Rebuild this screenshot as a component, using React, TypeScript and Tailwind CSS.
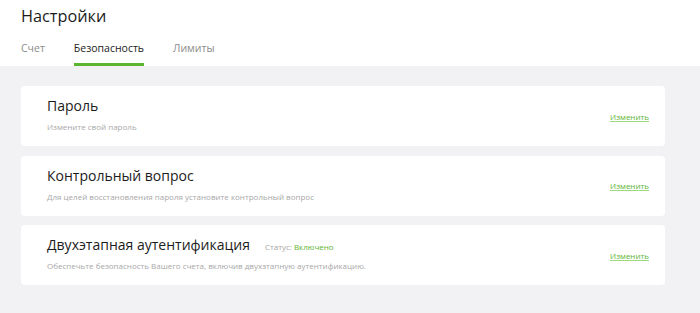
const sections = [
  { title: "Пароль", text: "Измените свой пароль" },
  {
    title: "Контрольный вопрос",
    text: "Для целей восстановления пароля установите контрольный вопрос",
  },
  {
    title: "Двухэтапная аутентификация",
    text: "Обеспечьте безопасность Вашего счета, включив двухэтапную аутентификацию.",
    status: "Включено",
  },
];

const tabs = ["Счет", "Безопасность", "Лимиты"];

export default function App() {
  return (
    <div className="min-h-[313px] w-[700px] bg-[#f2f2f4] font-['Open_Sans',sans-serif]">
      <header className="h-[66px] bg-white px-[21px] pt-[4px]">
        <h1 className="text-[16.3px] leading-[24px] text-[#1c1c1c]">
          Настройки
        </h1>
        <nav className="mt-[12px] flex gap-[29px]">
          {tabs.map((tab, i) => (
            <div
              key={tab}
              className={
                i === 1
                  ? "border-b-[3px] border-[#5cb531] pb-[7px] text-[10.5px] leading-[16px] text-[#1c1c1c]"
                  : "border-b-[3px] border-transparent pb-[7px] text-[10.5px] leading-[16px] text-[#8c8c8c]"
              }
            >
              {tab}
            </div>
          ))}
        </nav>
      </header>

      <main className="flex w-[665px] flex-col gap-[9.5px] pl-[21px] pt-[20px]">
        {sections.map((s) => (
          <div
            key={s.title}
            className="flex h-[60px] justify-between rounded-[4px] bg-white pl-[26px] pr-[16px]"
          >
            <div className="pt-[10px]">
              <div className="flex items-baseline gap-[15px]">
                <h2 className="text-[14px] leading-[20px] text-[#1c1c1c]">
                  {s.title}
                </h2>
                {s.status && (
                  <span className="text-[8px] text-[#a6a6a6]">
                    Статус: <span className="text-[#5cb531]">{s.status}</span>
                  </span>
                )}
              </div>
              <p className="mt-[5px] text-[8px] leading-[12px] text-[#a8a8a8]">
                {s.text}
              </p>
            </div>
            <a
              href="#"
              className="self-center pt-[1px] text-[8px] text-[#5cb531] underline decoration-[#9fd97f]"
            >
              Изменить
            </a>
          </div>
        ))}
      </main>
    </div>
  );
}
